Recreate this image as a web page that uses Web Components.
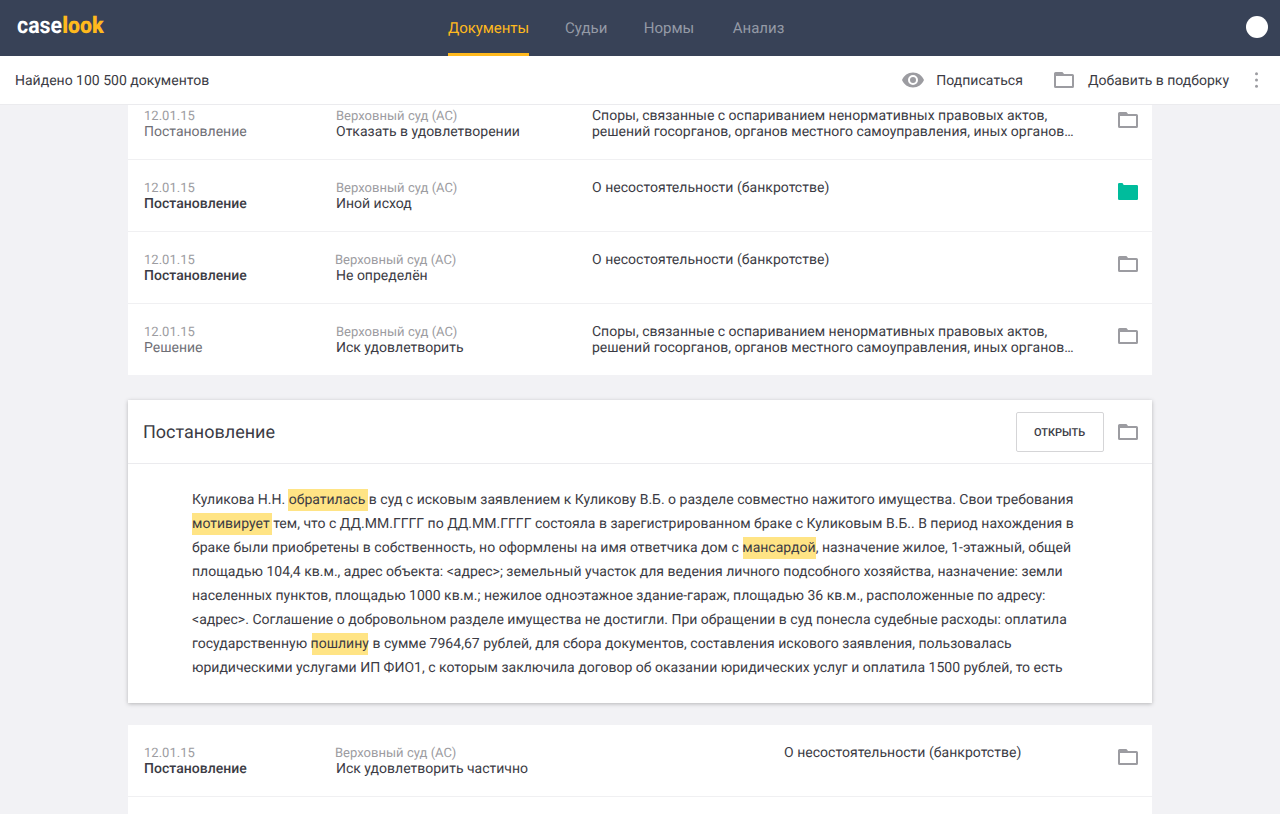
<!DOCTYPE html>
<html lang="ru">
<head>
<meta charset="utf-8">
<title>caselook</title>
<style>
html,body{margin:0;height:100%;overflow:hidden;background:#f2f2f5}
body{font:14px/16px Roboto,"Liberation Sans",sans-serif;color:#3b3b44;text-rendering:geometricPrecision;-webkit-font-smoothing:antialiased}
</style>
</head>
<body>
<look-app></look-app>
<script>
const define = (name, html, setup) => customElements.define(name, class extends HTMLElement {
  connectedCallback() {
    if (this.shadowRoot) return;
    this.attachShadow({ mode: 'open' }).innerHTML = html;
    if (setup) setup(this, this.shadowRoot);
  }
});

define('look-folder', `
<style>
:host{display:block;width:20px;height:17px;flex:none;color:#9c9ca1}
svg{display:block}
.full{display:none}
:host([full]){color:#00bc9c}
:host([full]) .full{display:block}
:host([full]) .open{display:none}
</style>
<svg class="open" width="20" height="17" viewBox="0 0 20 17"><path fill="currentColor" fill-rule="evenodd" d="M1.6 0H8Q8.8 0 9.3 1L10 2H18.4Q20 2 20 3.6V14.4Q20 16 18.4 16H1.6Q0 16 0 14.4V1.6Q0 0 1.6 0ZM2 4V14H18V4Z"/></svg>
<svg class="full" width="20" height="17" viewBox="0 0 20 17"><path fill="currentColor" d="M1.200 0H4Q4.800 0 5.200 1L5.600 2H18.800Q20 2 20 3.200V15.800Q20 17 18.800 17H1.200Q0 17 0 15.800V1.200Q0 0 1.200 0Z"/></svg>`);

define('look-header', `
<style>
:host{display:grid;grid-template-columns:448px 1fr auto;height:56px;background:#384257}
.logo{margin:12px 0 0 16.5px;font-size:23px;line-height:28px;font-weight:700;color:#fff;white-space:nowrap}
.logo span{display:inline-block;transform:scaleX(.93);transform-origin:0 50%}
b{color:#ffb91d}
nav{display:flex;font-size:15px}
a{color:#949aa6;line-height:56px;height:56px;box-sizing:border-box;margin-right:36.500px;white-space:nowrap}
a.on{color:#ffb91d;border-bottom:3px solid #ffb91d;letter-spacing:-.07px;width:81px;margin-right:36px}
a:last-child{margin-left:2px}
.me{width:22px;height:22px;border-radius:50%;background:#fff;margin:16px 12px 0 0}
</style>
<div class="logo"><span>case<b>look</b></span></div>
<nav><a class="on">Документы</a><a>Судьи</a><a>Нормы</a><a>Анализ</a></nav>
<div class="me"></div>`);

define('look-toolbar', `
<style>
:host{display:flex;height:48px;background:#fff;border-bottom:1px solid #ebebee;align-items:center;position:relative;z-index:1;white-space:nowrap}
span{padding-top:2px}
.n{margin-left:15px;flex:1}
.s{letter-spacing:.05px}
.eye{margin-right:12px}
look-folder{margin:0 14px 0 31px}
.dots{margin:0 21px 0 25px}
svg{display:block}
</style>
<span class="n">Найдено 100 500 документов</span>
<svg class="eye" width="22" height="16" viewBox="0 0 22 16"><path fill="#9c9ca1" fill-rule="evenodd" d="M11 .5C6 .5 1.8 3.5 0 8c1.800 4.500 6 7.500 11 7.500s9.200-3 11-7.500C20.200 3.500 16 .5 11 .5ZM11 13a5 5 0 1 1 0-10 5 5 0 0 1 0 10ZM11 5a3 3 0 1 0 0 6 3 3 0 0 0 0-6Z"/></svg>
<span class="s">Подписаться</span>
<look-folder></look-folder><span class="a">Добавить в подборку</span>
<svg class="dots" width="5" height="16" viewBox="0 0 5 16" fill="#9c9ca1"><circle cx="2.500" cy="1.700" r="1.500"/><circle cx="2.500" cy="8" r="1.500"/><circle cx="2.500" cy="14.300" r="1.500"/></svg>`);

define('look-list', `<style>:host{display:block;background:#fff;width:1024px}</style><slot></slot>`);

define('look-row', `
<style>
:host{display:grid;grid-template-columns:192px 256px 1fr 20px;height:50px;padding:21px 14px 0 16px;border-bottom:1px solid #f0f0f2;white-space:nowrap}
:host([wide]){grid-template-columns:192px 448px 1fr 20px}
:host([last]){border:0}
small{display:block;font-size:13px;line-height:16px;color:#9c9ca1;letter-spacing:.02px}
:host([shift]) .court{margin-left:-1px}
p{margin:-1px 0 0}
div p{margin-top:0}
div{margin-top:-1px;padding-top:1px}
div small{line-height:16px}
.type{font-weight:500;letter-spacing:.03px}
:host([read]) .type{font-weight:400;color:#6f6f76;letter-spacing:0}
div p{margin-top:-1px}
look-folder{margin-top:3px}
:host([full]) look-folder{margin-top:2px}
</style>
<div><small class="d">12.01.15</small><p class="type"><slot name="type"></slot></p></div>
<div><small class="court">Верховный суд (АС)</small><p><slot name="outcome"></slot></p></div>
<p><slot></slot></p>
<look-folder></look-folder>`, (el, root) => {
  if (el.hasAttribute('full')) root.querySelector('look-folder').setAttribute('full', '');
});

define('look-document', `
<style>
:host{display:block;width:1024px;height:303px;background:#fff;box-shadow:0 1px 4px rgba(0,0,0,.25)}
header{display:flex;align-items:center;height:63px;border-bottom:1px solid #ebebee;padding:0 14px 0 15px}
h2{font-size:18px;font-weight:400;margin:0;padding-top:2px;flex:1}
button{font:500 11px/16px Roboto,sans-serif;color:#3b3b44;background:#fff;border:1px solid #d5d5d7;border-radius:2px;width:88px;height:40px;padding:2px 1px 0 0;margin-right:14px;text-rendering:inherit}
look-folder{margin-top:2px}
section{padding:24px 64px 0;line-height:24px;white-space:nowrap;letter-spacing:.012px}
</style>
<header><h2><slot name="title"></slot></h2><button>ОТКРЫТЬ</button><look-folder></look-folder></header>
<section><slot></slot></section>`);

define('look-line', `<style>:host{display:block;height:24px;position:relative;z-index:0}</style><slot></slot>`);
define('look-mark', `
<style>
:host{position:relative}
:host::before{content:"";position:absolute;z-index:-1;left:var(--l,0);right:var(--r,0);top:-3px;height:22px;background:#ffe485}
</style><slot></slot>`);

define('look-app', `
<style>
:host{display:block;height:814px;overflow:hidden}
main{display:flex;flex-direction:column;align-items:center;margin-top:-17px}
look-document{margin:25px 0 22px}
.next{height:18px}
.b{letter-spacing:.03px}
</style>
<look-header></look-header>
<look-toolbar></look-toolbar>
<main>
<look-list>
<look-row read><span slot="type">Постановление</span><span slot="outcome">Отказать в удовлетворении</span><span>Споры, связанные с оспариванием ненормативных правовых актов,</span><br><span>решений госорганов, органов местного самоуправления, иных органов…</span></look-row>
<look-row full><span slot="type">Постановление</span><span slot="outcome">Иной исход</span><span class="b">О несостоятельности (банкротстве)</span></look-row>
<look-row shift><span slot="type">Постановление</span><span slot="outcome">Не определён</span><span class="b">О несостоятельности (банкротстве)</span></look-row>
<look-row read last><span slot="type">Решение</span><span slot="outcome">Иск удовлетворить</span><span>Споры, связанные с оспариванием ненормативных правовых актов,</span><br><span>решений госорганов, органов местного самоуправления, иных органов…</span></look-row>
</look-list>
<look-document><span slot="title">Постановление</span>
<look-line><span>Куликова Н.Н. <look-mark style="--l:-1px;--r:-3px">обратилась</look-mark> в суд с исковым заявлением к Куликову В.Б. о разделе совместно нажитого имущества. Свои требования</span></look-line>
<look-line><span><look-mark style="--r:-2px">мотивирует</look-mark> тем, что с ДД.ММ.ГГГГ по ДД.ММ.ГГГГ состояла в зарегистрированном браке с Куликовым В.Б.. В период нахождения в</span></look-line>
<look-line><span>браке были приобретены в собственность, но оформлены на имя ответчика дом с <look-mark style="--l:1px">мансардой</look-mark>, назначение жилое, 1-этажный, общей</span></look-line>
<look-line><span>площадью 104,4 кв.м., адрес объекта: &lt;адрес&gt;; земельный участок для ведения личного подсобного хозяйства, назначение: земли</span></look-line>
<look-line><span>населенных пунктов, площадью 1000 кв.м.; нежилое одноэтажное здание-гараж, площадью 36 кв.м., расположенные по адресу:</span></look-line>
<look-line><span>&lt;адрес&gt;. Соглашение о добровольном разделе имущества не достигли. При обращении в суд понесла судебные расходы: оплатила</span></look-line>
<look-line><span>государственную <look-mark style="--l:1px;--r:1px">пошлину</look-mark> в сумме 7964,67 рублей, для сбора документов, составления искового заявления, пользовалась</span></look-line>
<look-line><span>юридическими услугами ИП ФИО1, с которым заключила договор об оказании юридических услуг и оплатила 1500 рублей, то есть</span></look-line>
</look-document>
<look-list>
<look-row wide shift><span slot="type">Постановление</span><span slot="outcome">Иск удовлетворить частично</span><span class="b">О несостоятельности (банкротстве)</span></look-row>
<div class="next"></div>
</look-list>
</main>`);
</script>
</body>
</html>
